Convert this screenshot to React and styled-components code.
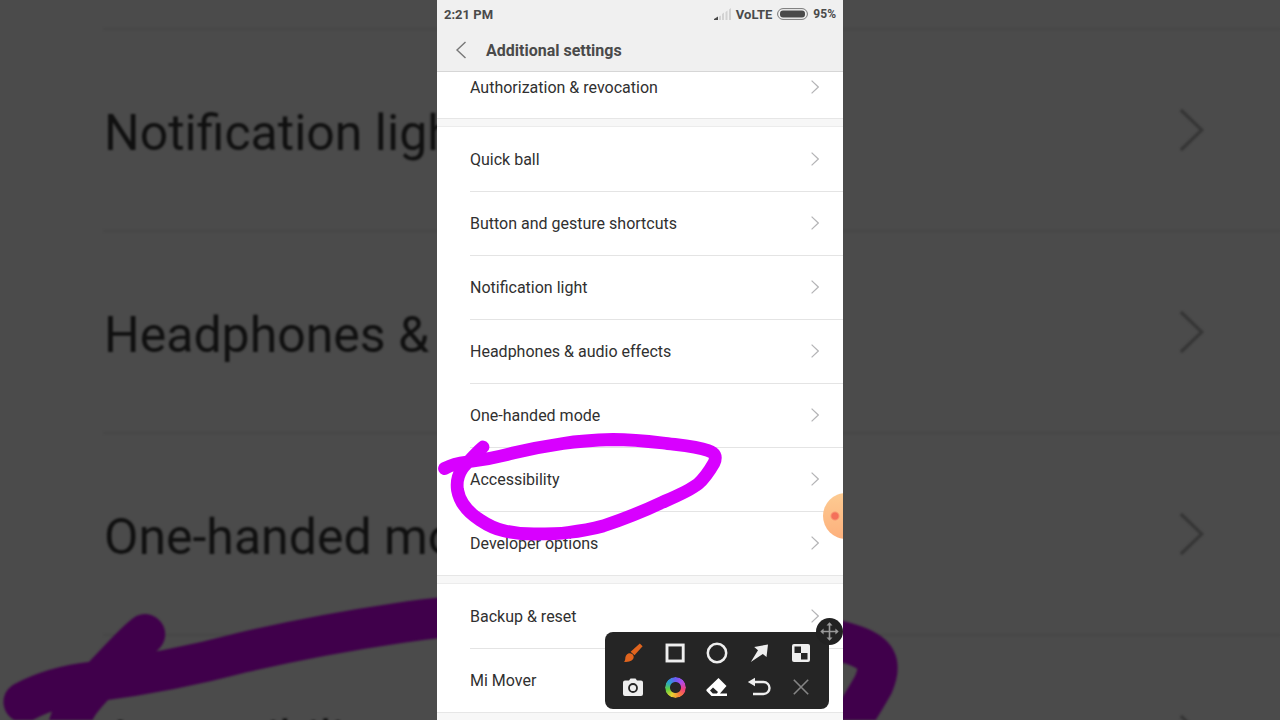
import React from 'react';
import styled, { createGlobalStyle } from 'styled-components';

const GlobalStyle = createGlobalStyle`
  * {
    box-sizing: border-box;
  }
  body {
    margin: 0;
    background: #4b4b4b;
    font-family: Roboto, 'Liberation Sans', sans-serif;
  }
`;

const Page = styled.div`
  position: relative;
  display: flex;
  justify-content: center;
  height: 100vh;
  overflow: hidden;
`;

const Backdrop = styled.div`
  position: absolute;
  inset: 0;
  display: flex;
  flex-direction: column;
  padding-top: 28px;
  filter: blur(1px);
`;

const BackdropRow = styled.div`
  display: flex;
  flex: none;
  align-items: center;
  justify-content: space-between;
  height: 202px;
  margin-left: 104px;
  padding-right: 76px;
  border-top: 2px solid #464646;
  color: #101010;
  font-size: 50px;
  line-height: 60px;
  white-space: nowrap;
`;

const BackdropLabel = styled.span`
  padding-top: 5px;
`;

const Phone = styled.main`
  position: relative;
  display: flex;
  flex-direction: column;
  width: 406px;
  max-width: 100%;
  overflow: hidden;
  background: #ffffff;
`;

const Header = styled.header`
  flex: none;
  background: #f0f0f0;
  border-bottom: 1px solid #d6d6d6;
  color: #4a4a4a;
`;

const StatusBar = styled.div`
  display: flex;
  align-items: center;
  justify-content: space-between;
  height: 28px;
  padding: 0 7px;
  font-size: 13px;
  font-weight: 700;
`;

const StatusIcons = styled.div`
  display: flex;
  align-items: center;
  gap: 5px;
`;

const Percent = styled.span`
  font-size: 12px;
`;

const TitleBar = styled.div`
  display: flex;
  align-items: center;
  gap: 16px;
  height: 43px;
  padding-left: 16px;
`;

const BackButton = styled.button`
  display: flex;
  padding: 0;
  border: 0;
  background: none;
  color: #777777;
`;

const Title = styled.h1`
  margin: 0;
  padding-top: 2px;
  font-size: 16px;
  font-weight: 700;
  line-height: 20px;
`;

const Group = styled.nav`
  flex: none;
  border-bottom: 1px solid #e6e6e6;
  & + & {
    margin-top: 7px;
    border-top: 1px solid #ececec;
  }
`;

const List = styled.div`
  flex: none;
  background: #f7f7f7;
`;

const Row = styled.a`
  display: flex;
  align-items: center;
  justify-content: space-between;
  height: ${(props) => (props.$short ? '46px' : '64px')};
  padding: ${(props) => (props.$short ? '0 24px 16px 33px' : '0 24px 0 33px')};
  background: #ffffff;
  color: #303030;
  font-size: 16px;
  line-height: 20px;
  text-decoration: none;
  & + & {
    background: linear-gradient(#e4e4e4, #e4e4e4) 33px 0 / 100% 1px no-repeat
      #ffffff;
  }
`;

const RowLabel = styled.span`
  padding-top: 2px;
`;

const Scribble = styled.svg`
  position: absolute;
  inset: 0;
  width: 100%;
  height: 100%;
  pointer-events: none;
`;

const FloatingBall = styled.button`
  position: absolute;
  top: 493px;
  right: -26px;
  width: 46px;
  height: 46px;
  padding: 0;
  border: 0;
  border-radius: 50%;
  background: radial-gradient(circle at 12px 23px, #f4705a 3px, transparent 5px),
    linear-gradient(#fdcb92, #fdb07c);
`;

const Toolbar = styled.div`
  position: absolute;
  right: 14px;
  bottom: 11px;
  display: grid;
  grid-template-columns: repeat(5, 42px);
  grid-auto-rows: 34px;
  padding: 4px 7px 5px;
  border-radius: 8px;
  background: #252525;
`;

const Tool = styled.button`
  display: flex;
  align-items: center;
  justify-content: center;
  padding: 0;
  border: 0;
  background: none;
  color: ${(props) => props.$color || '#eeeeee'};
`;

const MoveHandle = styled.button`
  position: absolute;
  top: -14px;
  right: -14px;
  display: flex;
  align-items: center;
  justify-content: center;
  width: 27px;
  height: 27px;
  padding: 0;
  border: 0;
  border-radius: 50%;
  background: #222222;
  color: #999999;
`;

const ColorRing = styled.span`
  width: 21px;
  height: 21px;
  border-radius: 50%;
  background: conic-gradient(
    #6a5cf5,
    #b04be8,
    #f0407a,
    #f5803a,
    #e8d030,
    #5ed040,
    #28a0d0,
    #6a5cf5
  );
  mask: radial-gradient(circle, transparent 5px, #000000 6px);
`;

const groups = [
  ['Authorization & revocation'],
  [
    'Quick ball',
    'Button and gesture shortcuts',
    'Notification light',
    'Headphones & audio effects',
    'One-handed mode',
    'Accessibility',
    'Developer options',
  ],
  ['Backup & reset', 'Mi Mover'],
  [],
];

const backdropRows = [
  'Notification light',
  'Headphones & audio effects',
  'One-handed mode',
  'Accessibility',
];

const Chevron = ({ width, height, color, stroke }) => (
  <svg width={width} height={height} viewBox='0 0 8 14' fill='none'>
    <path d='M.6.6 7.3 7 .6 13.4' stroke={color} strokeWidth={stroke} />
  </svg>
);

// Drawn on the 406x720 phone canvas, scaled up for the backdrop
const Circled = ({ color }) => (
  <Scribble
    viewBox='0 0 406 720'
    preserveAspectRatio='xMidYMid slice'
    fill='none'
    aria-hidden='true'
  >
    <path
      d='M46 447C42 450 37 456 33 460C29 464 27 466 25 469C21 475 19.500 483 20.500 490C23 504 32 513 43 520C52 526 59 529 66 530.500C76 533 86 534 97 534C112 534 121 534 131 532.500C144 531 155 529 166 526C184 520 205 512 226 502C240 496 252 491 261 484C269 477 273 470 277 463C280 456 278 453 271 450.500C258 446 240 445 226 443C209 441 193 439.500 176 439.500C158 440 142 441 126 443.500C109 446 93 449 76 453C61 457 45 460 30 462C21 463 14 465 7.500 468.500'
      stroke={color}
      strokeWidth='12.800'
      strokeLinecap='round'
      strokeLinejoin='round'
    />
  </Scribble>
);

const Signal = () => (
  <svg width='17' height='12' viewBox='0 0 17 12'>
    <path d='M0 12v-1l4-2.500V12z' fill='#4a4a4a' />
    <path
      d='M5 8.500l2-1V12H5zM8 6l2-1.500V12H8zM11.500 4l2-1.500V12h-2zM15 1.500 17 0v12h-2z'
      fill='#d2d2d2'
    />
  </svg>
);

const Battery = () => (
  <svg width='31' height='12' viewBox='0 0 31 12'>
    <rect x='.6' y='.6' width='29.800' height='10.800' rx='5.400' fill='none' stroke='#777777' />
    <rect x='3' y='2.600' width='25' height='6.800' rx='3' fill='#4a4a4a' />
  </svg>
);

const Brush = () => (
  <svg width='20' height='20' viewBox='0 0 20 20' fill='currentColor'>
    <path d='M16.800.6 19.600 3.200 11.500 12.300 7.600 8.800z' />
    <path d='M7 10.200c2.300.2 3.800 1.800 3.700 3.900-.2 3.300-3.700 5.300-10 4.700 1.700-1 1.400-2.500 1.700-4.500.4-2.400 2.300-4.300 4.600-4.100z' />
  </svg>
);

const Square = () => (
  <svg width='20' height='20' viewBox='0 0 20 20' fill='none' stroke='currentColor'>
    <rect x='2' y='2' width='16.200' height='16' strokeWidth='2.900' />
  </svg>
);

const Circle = () => (
  <svg width='22' height='22' viewBox='0 0 22 22' fill='none' stroke='currentColor'>
    <circle cx='11' cy='11' r='9.200' strokeWidth='2.500' />
  </svg>
);

const Arrow = () => (
  <svg width='20' height='20' viewBox='0 0 20 20' fill='currentColor'>
    <path d='M19 1.500 17.500 14 13.800 11 1.800 19 9 7.200 5.200 4z' />
  </svg>
);

const Mosaic = () => (
  <svg width='20' height='20' viewBox='0 0 20 20'>
    <rect x='1' y='1' width='18' height='18' rx='2' fill='currentColor' />
    <path d='M3.500 3.500H10V10H3.500zM10 10h6.500v6.500H10z' fill='#252525' />
  </svg>
);

const Camera = () => (
  <svg width='20' height='18' viewBox='0 0 20 18'>
    <path
      d='M2 2.500h4L7.500.5h5L14 2.500h4a2 2 0 0 1 2 2V16a2 2 0 0 1-2 2H2a2 2 0 0 1-2-2V4.500a2 2 0 0 1 2-2z'
      fill='currentColor'
    />
    <circle cx='10' cy='10' r='4' fill='none' stroke='#252525' strokeWidth='1.800' />
  </svg>
);

const Eraser = () => (
  <svg width='22' height='20' viewBox='0 0 22 20'>
    <path d='M12.500 1 20.500 9 14 16.500H21V19H5.500L.8 14.200a1.500 1.500 0 0 1 0-2z' fill='#ffffff' />
    <path d='M7 10.500 12 15 10.800 16.500H6.800L4 13.400z' fill='#252525' />
  </svg>
);

const Undo = () => (
  <svg width='24' height='20' viewBox='0 0 24 20'>
    <path d='M6 5h10.500a5.800 5.800 0 0 1 0 12H6' fill='none' stroke='currentColor' strokeWidth='2.400' />
    <path d='M.8 5 8 .8v8.400z' fill='currentColor' />
  </svg>
);

const Close = () => (
  <svg width='16' height='16' viewBox='0 0 16 16' fill='none' stroke='currentColor'>
    <path d='M.8.8 15.200 15.200M15.200.8.8 15.200' strokeWidth='1.600' />
  </svg>
);

const Move = () => (
  <svg width='19' height='19' viewBox='0 0 19 19'>
    <path d='M9.500 2v15M2 9.500h15' stroke='currentColor' strokeWidth='1.600' />
    <path
      d='M9.500.3 12.500 3.600h-6zM9.500 18.700l3-3.300h-6zM.3 9.500l3.300-3v6zM18.700 9.500l-3.300-3v6z'
      fill='currentColor'
    />
  </svg>
);

const tools = [
  { label: 'Brush', icon: <Brush />, color: '#e0641e' },
  { label: 'Rectangle', icon: <Square /> },
  { label: 'Circle', icon: <Circle /> },
  { label: 'Arrow', icon: <Arrow /> },
  { label: 'Mosaic', icon: <Mosaic /> },
  { label: 'Screenshot', icon: <Camera /> },
  { label: 'Color', icon: <ColorRing /> },
  { label: 'Eraser', icon: <Eraser /> },
  { label: 'Undo', icon: <Undo /> },
  { label: 'Close', icon: <Close />, color: '#858585' },
];

const App = () => {
  return (
    <Page>
      <GlobalStyle />
      <Backdrop aria-hidden='true'>
        {backdropRows.map((label) => (
          <BackdropRow key={label}>
            <BackdropLabel>{label}</BackdropLabel>
            <Chevron width={25} height={44} color='#353535' stroke='1' />
          </BackdropRow>
        ))}
        <Circled color='#40004b' />
      </Backdrop>

      <Phone>
        <Header>
          <StatusBar>
            <span>2:21 PM</span>
            <StatusIcons>
              <Signal />
              <span>VoLTE</span>
              <Battery />
              <Percent>95%</Percent>
            </StatusIcons>
          </StatusBar>
          <TitleBar>
            <BackButton aria-label='Back'>
              <svg width='17' height='18' viewBox='0 0 17 18' fill='none'>
                <path d='M12.500 1 4 9l8.500 8' stroke='currentColor' strokeWidth='1.400' />
              </svg>
            </BackButton>
            <Title>Additional settings</Title>
          </TitleBar>
        </Header>

        <List>
          {groups.map((rows, i) => (
            <Group key={i}>
              {rows.map((label) => (
                <Row key={label} href='#' $short={i === 0}>
                  <RowLabel>{label}</RowLabel>
                  <Chevron width={8} height={14} color='#b4b4b6' stroke='1.2' />
                </Row>
              ))}
            </Group>
          ))}
        </List>

        <Circled color='#d800ff' />
        <FloatingBall aria-label='Recorder' />
        <Toolbar>
          {tools.map((tool) => (
            <Tool key={tool.label} aria-label={tool.label} $color={tool.color}>
              {tool.icon}
            </Tool>
          ))}
          <MoveHandle aria-label='Move toolbar'>
            <Move />
          </MoveHandle>
        </Toolbar>
      </Phone>
    </Page>
  );
};

export default App;
